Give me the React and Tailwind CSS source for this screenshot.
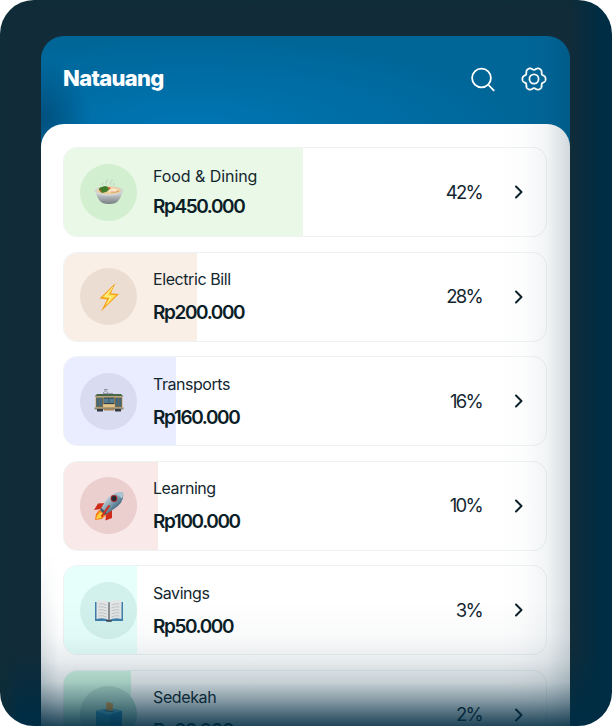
import React from "react";

function FoodIcon() {
  return (
    <svg viewBox="0 0 30 30" className="size-[30px]">
      <defs>
        <linearGradient id="bowl" x1="0" x2="0" y1="0" y2="1">
          <stop offset="0" stopColor="#dcdfe1" />
          <stop offset="1" stopColor="#777f84" />
        </linearGradient>
      </defs>
      <path d="M9 7.5q-2-1 0-3M13 6.5q-3-2 0-3.5 1-1 0-2M17 6.5q-2-2 0-3t1-2M20 7.5q-1-2 0-3" fill="none" stroke="#b9c5be" strokeWidth="0.8" />
      <path d="M1.5 13Q3 20 6 23q2 3 9 3t9-3q3-3 4.500-10z" fill="url(#bowl)" />
      <ellipse cx="15" cy="13" rx="14.3" ry="4.8" fill="#d0d5d7" />
      <ellipse cx="15" cy="12.5" rx="12" ry="3.9" fill="#edcf9d" />
      <ellipse cx="18" cy="12" rx="5" ry="1.8" fill="#f7e6cc" />
      <path d="M5 12q0-3 3-3l3-1 3 1 1 3-3 2-4 1z" fill="#3f7d2b" />
      <path d="M14 9l3 1-2 2zM6 11l2 3-2-1z" fill="#d9532c" />
      <path d="M17 14q5 1 8-1" fill="none" stroke="#d99a52" strokeWidth="0.9" />
    </svg>
  );
}

function BoltIcon() {
  return (
    <svg viewBox="0 0 30 30" className="size-[30px]">
      <path d="M21.5 1L5.500 16.5l7.500 1L7 29.500l18-17.500-8-.8z" fill="#f5a21b" />
      <path d="M19 5L8.5 15.3l7 .7-4.7 8.500L22 13.2l-7-.7z" fill="#ffe35b" />
      <path d="M19 5l-8 9 6 .7-4 7" fill="none" stroke="#fff5a7" strokeWidth="0.8" />
    </svg>
  );
}

function TramIcon() {
  return (
    <svg viewBox="0 0 30 30" className="size-[30px]">
      <path d="M9 6l3-2.500-2-1h4M12 3.500l2 2.500M19 6.500H9" stroke="#848a94" strokeWidth="0.8" fill="none" />
      <path d="M3 7h24l2.500 2.500H.5z" fill="#4b6547" />
      <path d="M1.500 9.500h27V22h-27z" fill="#d1ae72" />
      <path d="M2 10.500h7v9.500H2zM21 10.500h7v9.500h-7z" fill="#6b6b55" />
      <path d="M3 11h2v8H3zM6 11h2v8H6zM22 11h2v8h-2zM25 11h2v8h-2z" fill="#416781" />
      <path d="M9.5 10.500h11V17h-11z" fill="#31414b" />
      <path d="M10 11.500h4.700V16H10zM15.300 11.500H20V16h-4.700z" fill="#537b90" />
      <path d="M9.5 17.700h11v2.300h-11z" fill="#e0c38b" />
      <path d="M.5 20.500h29v2H.5z" fill="#8f8871" />
      <path d="M3 22h6v2.500H3zM21 22h6v2.500h-6z" fill="#333a42" />
      <path d="M10 22h10v1.500H10z" fill="#aa8255" />
    </svg>
  );
}

function RocketIcon() {
  return (
    <svg viewBox="0 0 30 30" className="size-[30px]">
      <defs>
        <linearGradient id="hull" x1="0" x2="1" y1="0" y2="1">
          <stop offset="0.2" stopColor="#dbe5e8" />
          <stop offset="0.45" stopColor="#8da9b8" />
          <stop offset="0.75" stopColor="#345e7a" />
        </linearGradient>
      </defs>
      <path d="M12 12L4 12.500 0 19l7-1zM18 19l0 8-6.500 2.500.5-9z" fill="#cf2d1c" />
      <path d="M5 19l-3 4L1 29l7-1 5-5z" fill="#f57b18" />
      <path d="M6 21l-3 4-1 3 5-1 4-4z" fill="#ffd13c" />
      <path d="M29 1.500Q19 0 12 9L6 19l5 5 9-6Q31 11 29 1.500z" fill="url(#hull)" />
      <path d="M29 1.500q-4-.3-7 1l6 5q1.300-3 1-6z" fill="#a9c6d3" />
      <path d="M7.500 17l5.500 5.700-2 1.300-5-5z" fill="#4c565e" />
      <circle cx="20" cy="7.500" r="3.400" fill="#a3282b" />
      <circle cx="20" cy="7.500" r="2.400" fill="#252b34" />
      <path d="M15 15L8 25" stroke="#cf2d1c" strokeWidth="2" strokeLinecap="round" />
    </svg>
  );
}

function BookIcon() {
  return (
    <svg viewBox="0 0 30 30" className="size-[30px]">
      <path d="M1 6h28v19H18q-3 2-6 0H1z" fill="#3f7eaa" />
      <path d="M2.500 5Q10 3 15 6.500V24Q9 21 2.500 23zM27.500 5Q20 3 15 6.500V24q6-3 12.500-1z" fill="#e3e5e5" />
      <path d="M14.200 6l.8.7.8-.7v18l-.8.7-.8-.7z" fill="#73797c" />
      <path d="M4.500 8q4-1 8 1M4.500 11q4-1 8 1M4.500 14q4-1 8 1M4.500 17q4-1 8 1M4.500 20q4-1 8 1M25.500 8q-4-1-8 1M25.500 11q-4-1-8 1M25.500 14q-4-1-8 1M25.500 17q-4-1-8 1M25.500 20q-4-1-8 1" fill="none" stroke="#b4b9bb" strokeWidth="0.8" />
      <path d="M12 24h6v1.500h-6z" fill="#464c51" />
    </svg>
  );
}

function BallotIcon() {
  return (
    <svg viewBox="0 0 30 30" className="size-[30px]">
      <path d="M2 11l13-3 13 3v15l-13 4L2 26z" fill="#3597c0" />
      <path d="M2 11l13-3 13 3-13 4z" fill="#61b5d1" />
      <path d="M15 15l13-4v15l-13 4z" fill="#2688b5" />
      <path d="M12.500 2l6.500 1.500-.5 8.500-6.500-1.500z" fill="#e29a45" />
      <path d="M10.500 10.500l10 1.500" stroke="#286f8d" strokeWidth="1.2" />
    </svg>
  );
}

const categories = [
  { name: "Food & Dining", amount: "Rp450.000", share: "42%", Icon: FoodIcon, fill: "w-[239px] bg-[#e9f8e7]", disc: "bg-[#d2efcf]", text: "pb-[1.5px] gap-[6px]", tracking: "tracking-[-0.06px]" },
  { name: "Electric Bill", amount: "Rp200.000", share: "28%", Icon: BoltIcon, fill: "w-[133px] bg-[#faefe6]", disc: "bg-[#ecddd3]", text: "gap-[9px] pb-[1.5px]", tracking: "tracking-[-0.42px]" },
  { name: "Transports", amount: "Rp160.000", share: "16%", Icon: TramIcon, fill: "w-[112px] bg-[#eaecff]", disc: "bg-[#d9dcf0]", text: "gap-[9px] pb-[1px]", tracking: "tracking-[-0.46px]" },
  { name: "Learning", amount: "Rp100.000", share: "10%", Icon: RocketIcon, fill: "w-[94px] bg-[#fae9e9]", disc: "bg-[#ebcece]", text: "gap-[9px] pb-[1.5px]", tracking: "tracking-[-0.46px]" },
  { name: "Savings", amount: "Rp50.000", share: "3%", Icon: BookIcon, fill: "w-[73px] bg-[#e6fffb]", disc: "bg-[#d2f1ec]", text: "gap-[9px] pb-[1px]", tracking: "tracking-[-0.46px]" },
  { name: "Sedekah", amount: "Rp20.000", share: "2%", Icon: BallotIcon, fill: "w-[67px] bg-[#d2f8e3]", disc: "bg-[#b9dfcf]", text: "gap-[9px] pb-[1.5px]", tracking: "tracking-[-0.38px]" },
];

function gearOutline() {
  const points = [];
  for (let i = 0; i < 180; i += 1) {
    const angle = (i / 180) * Math.PI * 2;
    const wave = Math.cos(6 * angle);
    const radius = 10.55 + 1.25 * wave - 0.2 * Math.cos(12 * angle);
    points.push(`${(14 + radius * Math.cos(angle)).toFixed(2)},${(14 + radius * Math.sin(angle)).toFixed(2)}`);
  }
  return points.join(" ");
}

function Category({ item }) {
  const { Icon } = item;
  return (
    <li className="relative flex h-[90px] shrink-0 items-center overflow-hidden rounded-[14px] border border-[#edf2f3] pr-[22px] pl-4">
      <div className={`absolute inset-y-0 left-0 ${item.fill}`} />
      <div className={`relative flex size-[57px] items-center justify-center rounded-full pt-px ${item.disc}`}>
        <Icon />
      </div>
      <div className={`relative ml-4 flex flex-col ${item.text}`}>
        <span className={`text-[16px] leading-6 whitespace-nowrap text-[#14272f] ${item.tracking}`}>{item.name}</span>
        <span className="text-[19px] leading-[25px] font-semibold tracking-[-1.4px] text-[#0b1d26]">{item.amount}</span>
      </div>
      <span className="relative ml-auto pt-[1px] text-[18.5px] tracking-[-1.7px] text-[#142731]">{item.share}</span>
      <svg viewBox="0 0 10 14" className="relative ml-[32px] h-[14px] w-[10px]" fill="none" stroke="#0c202a" strokeWidth="2" strokeLinecap="round" strokeLinejoin="round">
        <path d="M2 1.500L7.500 7 2 12.500" />
      </svg>
    </li>
  );
}

export default function App() {
  return (
    <div className="h-[726px] w-[612px] bg-white font-['Inter','Liberation_Sans',sans-serif]">
      <main className="h-full overflow-hidden rounded-[34px] bg-[#122b38] bg-[linear-gradient(90deg,#0f2c38_0,transparent_20px,transparent_568px,#002d43_600px),linear-gradient(180deg,#0e2c37_0,transparent_10px,transparent_650px,#002d43_715px)] pr-[42px] pl-[40.5px] pt-9">
        <section className="relative h-[690px] w-[529.5px] overflow-hidden rounded-t-[23px] bg-[#006698] bg-[radial-gradient(ellipse_50px_60px_at_0_82px,#004f7d_0%,transparent_100%),radial-gradient(ellipse_330px_90px_at_150px_92px,#0076b4_0%,transparent_100%)]">
          <header className="flex h-[88px] items-center pr-[22.5px] pl-[22.5px] text-white">
            <h1 className="pb-[4px] text-[22px] leading-7 font-extrabold tracking-[-0.7px]">Natauang</h1>
            <svg viewBox="0 0 28 28" className="mr-[23px] mb-[3px] ml-auto size-7" fill="none" stroke="currentColor" strokeWidth="1.8" strokeLinecap="round">
              <circle cx="12.500" cy="13" r="9.400" />
              <path d="M19.500 20l5.200 5.400" />
            </svg>
            <svg viewBox="0 0 28 28" className="mb-[2px] size-7" fill="none" stroke="currentColor" strokeWidth="1.8" strokeLinejoin="round">
              <polygon points={gearOutline()} />
              <circle cx="14" cy="14" r="4.600" />
            </svg>
          </header>
          <ul className="flex h-[602px] flex-col gap-[14.5px] overflow-hidden rounded-t-[23px] bg-white pt-[23px] pr-[23px] pl-[22.5px]">
            {categories.map((item) => <Category key={item.name} item={item} />)}
          </ul>
          <div className="pointer-events-none absolute inset-y-0 right-0 w-[70px] bg-[linear-gradient(90deg,transparent_0%,rgba(0,43,65,0.012)_35%,rgba(0,43,65,0.05)_67%,rgba(0,43,65,0.18)_100%)]" />
          <div className="pointer-events-none absolute bottom-0 left-0 h-[175px] w-[18px] bg-[linear-gradient(90deg,rgba(0,43,65,0.18),transparent)] [mask-image:linear-gradient(180deg,transparent,black)]" />
          <div className="pointer-events-none absolute inset-x-0 bottom-0 h-[126px] bg-[linear-gradient(180deg,transparent_0%,rgba(0,43,65,0.025)_28%,rgba(0,43,65,0.09)_48%,rgba(0,43,65,0.22)_65%,rgba(0,43,65,0.48)_80%,rgba(0,43,65,0.75)_93%,rgba(0,43,65,0.87)_100%)]" />
        </section>
      </main>
    </div>
  );
}
